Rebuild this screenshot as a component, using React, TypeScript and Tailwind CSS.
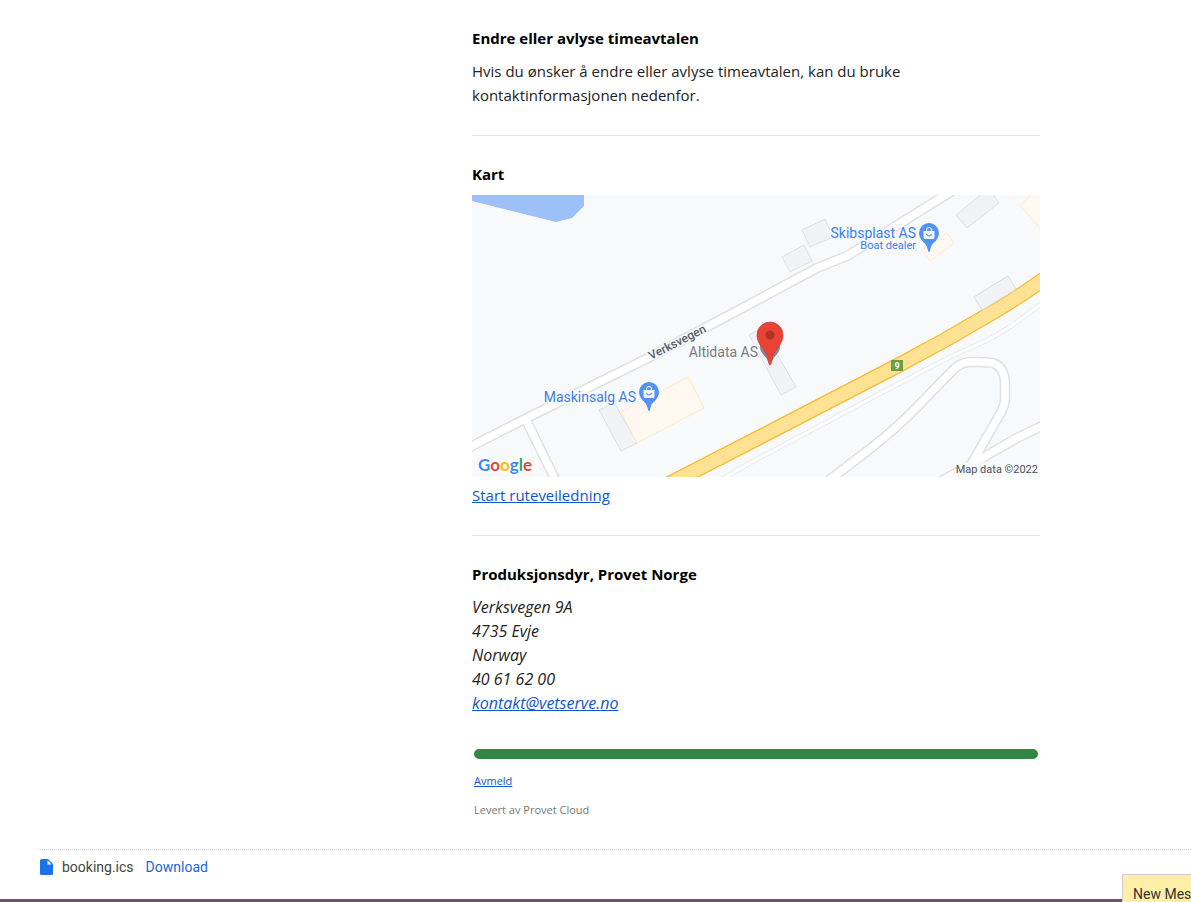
import React from "react";

interface SectionProps {
  title: string;
  children: React.ReactNode;
}

interface ShopPinProps {
  x: number;
  y: number;
}

const buildings = [
  "330,35 353,24 361,42 338,52",
  "310,62 332,50 340,66 318,77",
  "484,20 512,-3 520,-3 527,8 495,33",
  "502,102 536,81 544,94 510,115",
  "277,140 290,133 324,192 309,200",
  "127,215 143,208 148,218 165,248 149,256",
];

const shops = [
  "548,10 562,-3 570,-3 570,36",
  "450,55 475,38 482,48 458,66",
  "149,217 216,182 232,213 165,248",
];

const roads = [
  "M-4 253 L53 224 L176 163 L263 117 L345 73 L375 61 L411 39 L480 -4",
  "M54 225 L84 286",
  "M352 289 L394 257 Q425 233 445 212 L480 176 Q487 168 497 167 H508 L521 168 Q533 172 533 190 V204 Q533 210 528 219 L500 268",
  "M466 288 L505 266 L545 243 L572 230",
];

const track = "M244 288 L278 268 L411 197 L478 162 L516 145 L538 132 L572 107";
const highway = "M183 296 L290 241 L425 171 L473 145 L511 123 Q540 107 572 84";

function ShopPin({ x, y }: ShopPinProps) {
  return (
    <g transform={`translate(${x} ${y})`}>
      <path
        d="M0 19 C-1 19 -1 17 -2 14 C-3 10 -10 7 -10 0 A10 10 0 0 1 10 0 C10 7 3 10 2 14 C1 17 1 19 0 19Z"
        fill="#5491f5"
      />
      <path d="M-5.5 -2 H5.5 V4 Q5.5 6 4 6 H-4 Q-5.5 6 -5.5 4Z" fill="#f4f8ff" />
      <path d="M-2.5 -1 V-3 A2.5 2.5 0 0 1 2.5 -3 V-1" fill="none" stroke="#e4eeff" strokeWidth="1.2" />
      <path d="M-2.7 1 Q0 5 2.7 1" fill="none" stroke="#5491f5" strokeWidth="1.2" />
    </g>
  );
}

function AreaMap() {
  return (
    <svg
      viewBox="0 0 568 282"
      role="img"
      aria-label="Kart"
      className="block w-full font-[Roboto,sans-serif]"
    >
      <rect width="568" height="282" fill="#f8f9fb" />
      <path d="M0 0 H112 V11 L100 23 L84 27 L0 6Z" fill="#9dc0f9" />
      {buildings.map((points) => (
        <polygon key={points} points={points} fill="#f1f2f4" stroke="#dfe0e3" />
      ))}
      {shops.map((points) => (
        <polygon key={points} points={points} fill="#fff8f1" stroke="#fdebcb" />
      ))}

      <g fill="none" strokeLinejoin="round">
        {roads.map((d) => (
          <path key={d} d={d} stroke="#e0e1e4" strokeWidth="10.5" />
        ))}
        {roads.map((d) => (
          <path key={d} d={d} stroke="#fff" strokeWidth="7.5" />
        ))}
        <path d={track} stroke="#e9eaec" strokeWidth="5" />
        <path d={track} stroke="#fff" strokeWidth="3" />
        <path d={highway} stroke="#f7ba32" strokeWidth="15.5" />
        <path d={highway} stroke="#fde293" strokeWidth="13" />
      </g>
      <polygon points={buildings[3]} fill="#f1f2f4" stroke="#dfe0e3" />

      <rect x="419" y="165" width="12" height="11" fill="#689f45" />
      <text x="425" y="174" textAnchor="middle" fontSize="9" fontWeight="700" fill="#fff">9</text>

      <g stroke="#f8f9fb" strokeWidth="3" strokeLinejoin="round" paintOrder="stroke">
        <text x="444" y="43" textAnchor="end" fontSize="14" fill="#3f7fe8">Skibsplast AS</text>
        <text x="444" y="54" textAnchor="end" fontSize="11" fill="#3f7fe8">Boat dealer</text>
        <text x="164" y="207" textAnchor="end" fontSize="14" fill="#3f7fe8">Maskinsalg AS</text>
        <text x="286" y="162" textAnchor="end" fontSize="14" fill="#757d83">Altidata AS</text>
        <text x="179" y="165" fontSize="12" fontWeight="500" fill="#596267" transform="rotate(-27 179 165)">
          Verksvegen
        </text>
      </g>

      <ShopPin x={457} y={38} />
      <ShopPin x={177} y={197} />

      <path d="M288 152 A10 10 0 0 1 308 152 C308 158 302 161 300 166 H296 C294 161 288 158 288 152Z" fill="#7b8b99" />
      <path
        d="M298 170 C296 170 297 163 293 157 C289 151 285 147 285 140 A13 13 0 0 1 311 140 C311 147 307 151 303 157 C299 163 300 170 298 170Z"
        fill="#ea4335"
        stroke="#cf3b30"
        strokeWidth="0.7"
      />
      <circle cx="298" cy="140" r="4.5" fill="#b13229" />

      <text x="6" y="276" fontSize="17" fontWeight="700" className="font-[Lato,sans-serif]" stroke="#fff" strokeWidth="2" paintOrder="stroke">
        <tspan fill="#4285f4">G</tspan>
        <tspan fill="#ea4335">o</tspan>
        <tspan fill="#fbbc05">o</tspan>
        <tspan fill="#4285f4">g</tspan>
        <tspan fill="#34a853">l</tspan>
        <tspan fill="#ea4335">e</tspan>
      </text>
      <rect x="485" y="267" width="83" height="15" fill="#f8f9fb" fillOpacity="0.8" />
      <text x="566" y="278" textAnchor="end" fontSize="11" fill="#4b5458" className="font-[Roboto,sans-serif]">
        Map data ©2022
      </text>
    </svg>
  );
}

function Section({ title, children }: SectionProps) {
  return (
    <section className="border-b border-[#e4e4e4] pt-[26px] pb-7">
      <h2 className="leading-6 font-bold text-black">{title}</h2>
      {children}
    </section>
  );
}

function App() {
  return (
    <div className="relative flex min-h-screen flex-col overflow-hidden bg-white font-['Open_Sans','Noto_Sans',sans-serif] text-[15px] leading-6 text-[#222]">
      <main className="mr-[151px] ml-[472px]">
        <Section title="Endre eller avlyse timeavtalen">
          <p className="mt-[9px] max-w-[480px]">
            Hvis du ønsker å endre eller avlyse timeavtalen, kan du bruke kontaktinformasjonen nedenfor.
          </p>
        </Section>

        <Section title="Kart">
          <div className="mt-[9px]">
            <AreaMap />
          </div>
          <a href="#rute" className="mt-1.5 block w-fit text-[#15c] underline">
            Start ruteveiledning
          </a>
        </Section>

        <section className="pt-[26px]">
          <h2 className="leading-6 font-bold text-black">Produksjonsdyr, Provet Norge</h2>
          <address className="mt-[9px] flex flex-col items-start text-base italic">
            <span>Verksvegen 9A</span>
            <span>4735 Evje</span>
            <span>Norway</span>
            <span>40 61 62 00</span>
            <a href="mailto:kontakt@vetserve.no" className="text-[#15c] underline">
              kontakt@vetserve.no
            </a>
          </address>
        </section>

        <footer className="mx-0.5 mt-[34px] text-[11px] leading-5">
          <div className="h-2.5 rounded-full bg-[#2f8743]" />
          <a href="#avmeld" className="mt-3 block w-fit text-[#15c] underline">
            Avmeld
          </a>
          <p className="mt-[9px] text-[#777]">Levert av Provet Cloud</p>
        </footer>
      </main>

      <div className="mt-[29px] ml-[38px] flex items-center border-t border-dotted border-[#ccc] pt-[7px] font-[Roboto,sans-serif] text-sm leading-5 text-[#444]">
        <svg viewBox="0 0 13 16" className="ml-0.5 h-4 w-[13px]" aria-hidden="true">
          <path d="M1.5 0 H8 L13 5 V14.5 Q13 16 11.5 16 H1.5 Q0 16 0 14.5 V1.5 Q0 0 1.5 0Z" fill="#1a73e8" />
          <path d="M7.5 1.2 V5.5 H11.8Z" fill="#fff" />
        </svg>
        <span className="ml-[9px]">booking.ics</span>
        <a href="#download" className="ml-3 text-[#1a65d6]">
          Download
        </a>
      </div>

      <div className="mt-auto h-[3px] bg-[#735267]" />

      <button
        type="button"
        className="absolute right-0 bottom-0 h-7 w-[69px] overflow-hidden border-t border-l border-[#ccc] bg-[#ffefa6] pt-[9px] pl-2.5 text-left font-[Roboto,sans-serif] text-sm leading-5 whitespace-nowrap text-[#333]"
      >
        New Mes
      </button>
    </div>
  );
}

export default App;
